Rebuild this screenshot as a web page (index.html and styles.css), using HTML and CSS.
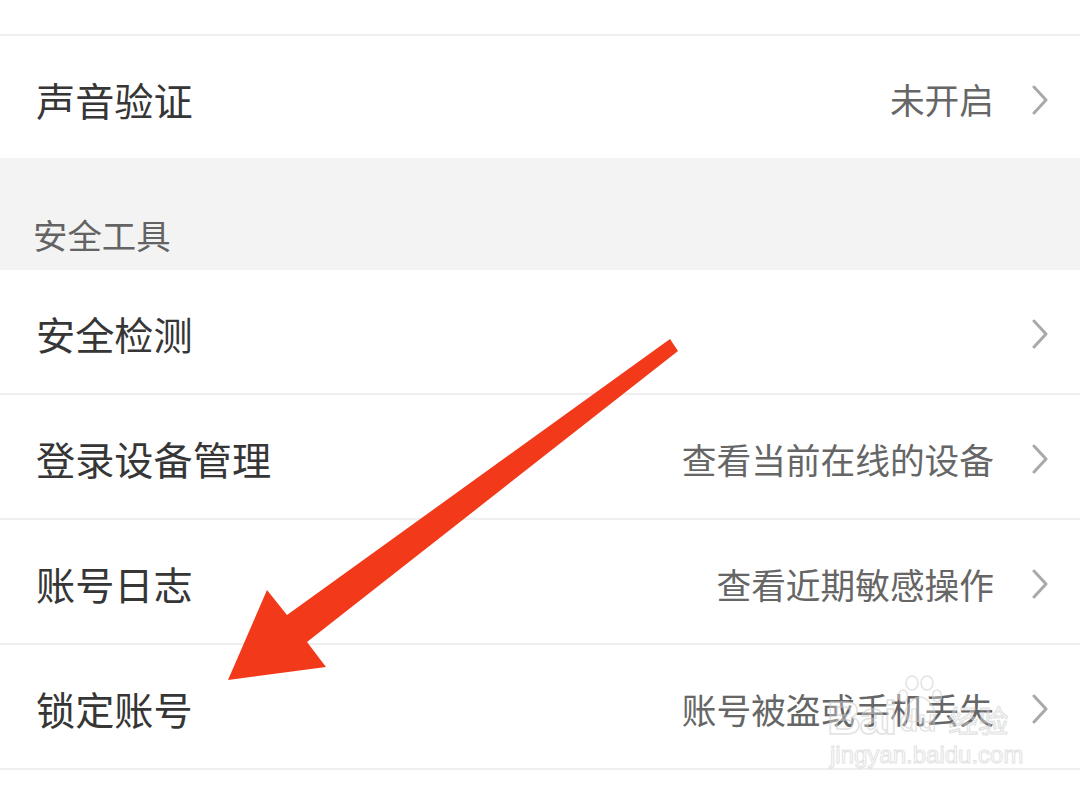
FILE: index.html
```html
<!DOCTYPE html>
<html lang="zh-CN">
<head>
<meta charset="utf-8">
<title>账号与安全</title>
<link rel="stylesheet" href="styles.css">
</head>
<body>
<div class="page">
  <div class="top-gap"></div>
  <div class="row row-first">
    <span class="label">声音验证</span>
    <span class="value">未开启</span>
    <svg class="chev" width="16" height="30" viewBox="0 0 16 30"><polyline points="2,2 14,15 2,28" /></svg>
  </div>
  <div class="section-header"><span>安全工具</span></div>
  <div class="row">
    <span class="label">安全检测</span>
    <span class="value"></span>
    <svg class="chev" width="16" height="30" viewBox="0 0 16 30"><polyline points="2,2 14,15 2,28" /></svg>
  </div>
  <div class="row">
    <span class="label">登录设备管理</span>
    <span class="value">查看当前在线的设备</span>
    <svg class="chev" width="16" height="30" viewBox="0 0 16 30"><polyline points="2,2 14,15 2,28" /></svg>
  </div>
  <div class="row">
    <span class="label">账号日志</span>
    <span class="value">查看近期敏感操作</span>
    <svg class="chev" width="16" height="30" viewBox="0 0 16 30"><polyline points="2,2 14,15 2,28" /></svg>
  </div>
  <div class="row">
    <span class="label">锁定账号</span>
    <span class="value">账号被盗或手机丢失</span>
    <svg class="chev" width="16" height="30" viewBox="0 0 16 30"><polyline points="2,2 14,15 2,28" /></svg>
  </div>

  <svg class="arrow" width="1080" height="791" viewBox="0 0 1080 791">
    <polygon points="670,339 678,351 307,642 326,667 228,680 267,590 287,615" />
  </svg>

  <div class="watermark" aria-hidden="true">
    <div class="wm-top">
      <span class="wm-bai">Bai</span>
      <svg class="wm-paw" width="44" height="50" viewBox="0 0 44 50">
        <ellipse cx="14" cy="8" rx="6" ry="7"/>
        <ellipse cx="29" cy="8" rx="6" ry="7"/>
        <ellipse cx="5" cy="21" rx="4.5" ry="6"/>
        <ellipse cx="39" cy="21" rx="4.5" ry="6"/>
        <path d="M22 22 C14 22 6 34 7 41 C8 48 17 47 22 46 C27 47 36 48 37 41 C38 34 30 22 22 22 Z"/>
      </svg>
      <span class="wm-du">du</span>
      <span class="wm-jy">经验</span>
    </div>
    <div class="wm-url">jingyan.baidu.com</div>
  </div>
</div>
</body>
</html>
```

FILE: styles.css
```css
html, body {
  margin: 0;
  padding: 0;
  background: #ffffff;
}

body {
  font-family: "Noto Sans CJK SC", "Noto Sans", sans-serif;
  width: 1080px;
  height: 791px;
  overflow: hidden;
}

.page {
  position: relative;
  width: 1080px;
  height: 791px;
}

.top-gap {
  height: 34px;
  border-bottom: 2px solid #efefef;
}

.row {
  display: flex;
  align-items: center;
  box-sizing: border-box;
  height: 125px;
  padding: 5px 32px 0 36px;
  border-bottom: 2px solid #efefef;
  background: #fff;
}

.row-first {
  height: 122px;
  border-bottom: none;
}

.label {
  font-size: 39.2px;
  color: #363636;
  line-height: 1;
  flex: 1;
}

.value {
  font-size: 34.7px;
  color: #666666;
  line-height: 1;
}

.chev {
  margin-left: 38px;
  flex: none;
}

.chev polyline {
  fill: none;
  stroke: #a9a9a9;
  stroke-width: 3;
  stroke-linecap: round;
  stroke-linejoin: round;
}

.section-header {
  height: 112px;
  box-sizing: border-box;
  background: #f3f3f3;
  display: flex;
  align-items: flex-end;
  padding: 0 0 19px 33px;
}

.section-header span {
  font-size: 34.4px;
  line-height: 1;
  color: #636363;
}

.arrow {
  position: absolute;
  left: 0;
  top: 0;
  pointer-events: none;
}

.arrow polygon {
  fill: #f2391a;
}

.watermark {
  position: absolute;
  left: 827px;
  top: 675px;
  display: flex;
  flex-direction: column;
  opacity: 0.6;
  pointer-events: none;
}

.wm-top {
  display: flex;
  align-items: flex-end;
  height: 62px;
}

.wm-bai {
  font-family: "Liberation Sans", sans-serif;
  font-weight: bold;
  font-size: 47px;
  letter-spacing: -1.5px;
  line-height: 1;
  margin-bottom: -4px;
  color: rgba(255, 255, 255, 0.5);
  -webkit-text-stroke: 1.5px #cfcfcf;
}

.wm-paw {
  margin-left: 2px;
  align-self: flex-start;
}

.wm-paw ellipse, .wm-paw path {
  fill: rgba(255, 255, 255, 0.5);
  stroke: #d2d2d2;
  stroke-width: 1.5;
}

.wm-du {
  font-family: "Liberation Sans", sans-serif;
  font-weight: bold;
  font-size: 30px;
  line-height: 1;
  margin-left: -42px;
  margin-bottom: 1px;
  color: rgba(255, 255, 255, 0.4);
  -webkit-text-stroke: 1.2px #cfcfcf;
}

.wm-jy {
  font-family: "Noto Sans CJK SC", sans-serif;
  font-size: 30px;
  line-height: 1;
  margin-left: 12px;
  margin-bottom: 3px;
  color: rgba(255, 255, 255, 0.5);
  -webkit-text-stroke: 1.2px #cfcfcf;
}

.wm-url {
  font-family: "Liberation Sans", sans-serif;
  font-size: 24px;
  line-height: 1;
  margin-top: 6px;
  margin-left: 3px;
  color: rgba(255, 255, 255, 0.5);
  -webkit-text-stroke: 1px #cfcfcf;
}
```
